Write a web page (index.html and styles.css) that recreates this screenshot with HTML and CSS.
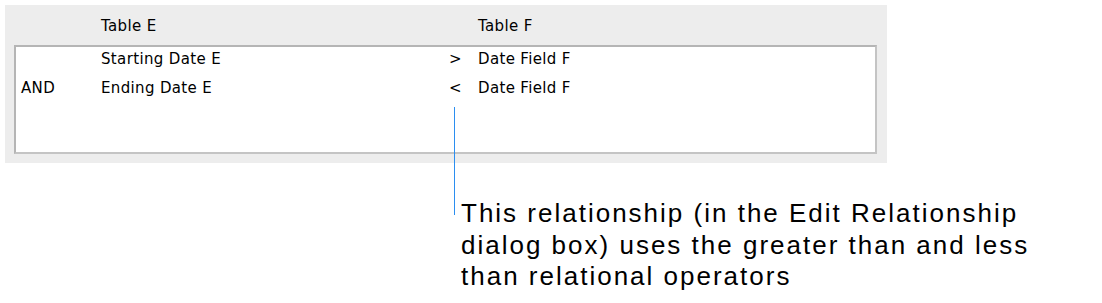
FILE: index.html
```html
<!DOCTYPE html>
<html lang="en">
<head>
  <meta charset="UTF-8" />
  <title>Edit Relationship</title>
  <link rel="stylesheet" href="styles.css">
</head>
<body>
  <div class="panel">
    <div class="row head">
      <span></span>
      <span>Table E</span>
      <span></span>
      <span>Table F</span>
    </div>
    <div class="box">
      <div class="row">
        <span></span>
        <span>Starting Date E</span>
        <span class="op">&gt;</span>
        <span>Date Field F</span>
      </div>
      <div class="row">
        <span>AND</span>
        <span>Ending Date E</span>
        <span class="op">&lt;</span>
        <span>Date Field F</span>
      </div>
    </div>
    <div class="leader"></div>
  </div>
  <p class="callout">This relationship (in the Edit Relationship<br>dialog box) uses the greater than and less<br>than relational operators</p>
</body>
</html>
```

FILE: styles.css
```css
body {
  margin: 5px;
  background: #fff;
  font-family: 'DejaVu Sans', sans-serif;
  color: #000;
}
.panel {
  position: relative;
  width: 882px;
  height: 158px;
  box-sizing: border-box;
  background: #ededed;
  padding: 40px 10px 9px 9px;
}
.row {
  display: grid;
  grid-template-columns: 80px 348px 29px 1fr;
  align-items: start;
  height: 29px;
  line-height: 24px;
  font-size: 15px;
  letter-spacing: 0.35px;
}
.head {
  position: absolute;
  top: 9px;
  left: 16px;
  right: 10px;
}
.box {
  height: 109px;
  box-sizing: border-box;
  background: #fff;
  border: 2px solid #b5b5b5;
  border-right-color: #c4c4c4;
  border-bottom-color: #c4c4c4;
  padding: 0 0 0 5px;
}
.op {
  padding-left: 0;
}
.leader {
  position: absolute;
  left: 449px;
  top: 102px;
  width: 1px;
  height: 108px;
  background: #2b8ef0;
}
.callout {
  margin: 35px 0 0 456px;
  font-family: 'Liberation Sans', Arial, sans-serif;
  font-size: 26px;
  line-height: 31.5px;
  letter-spacing: 2px;
  color: #000;
}
```
